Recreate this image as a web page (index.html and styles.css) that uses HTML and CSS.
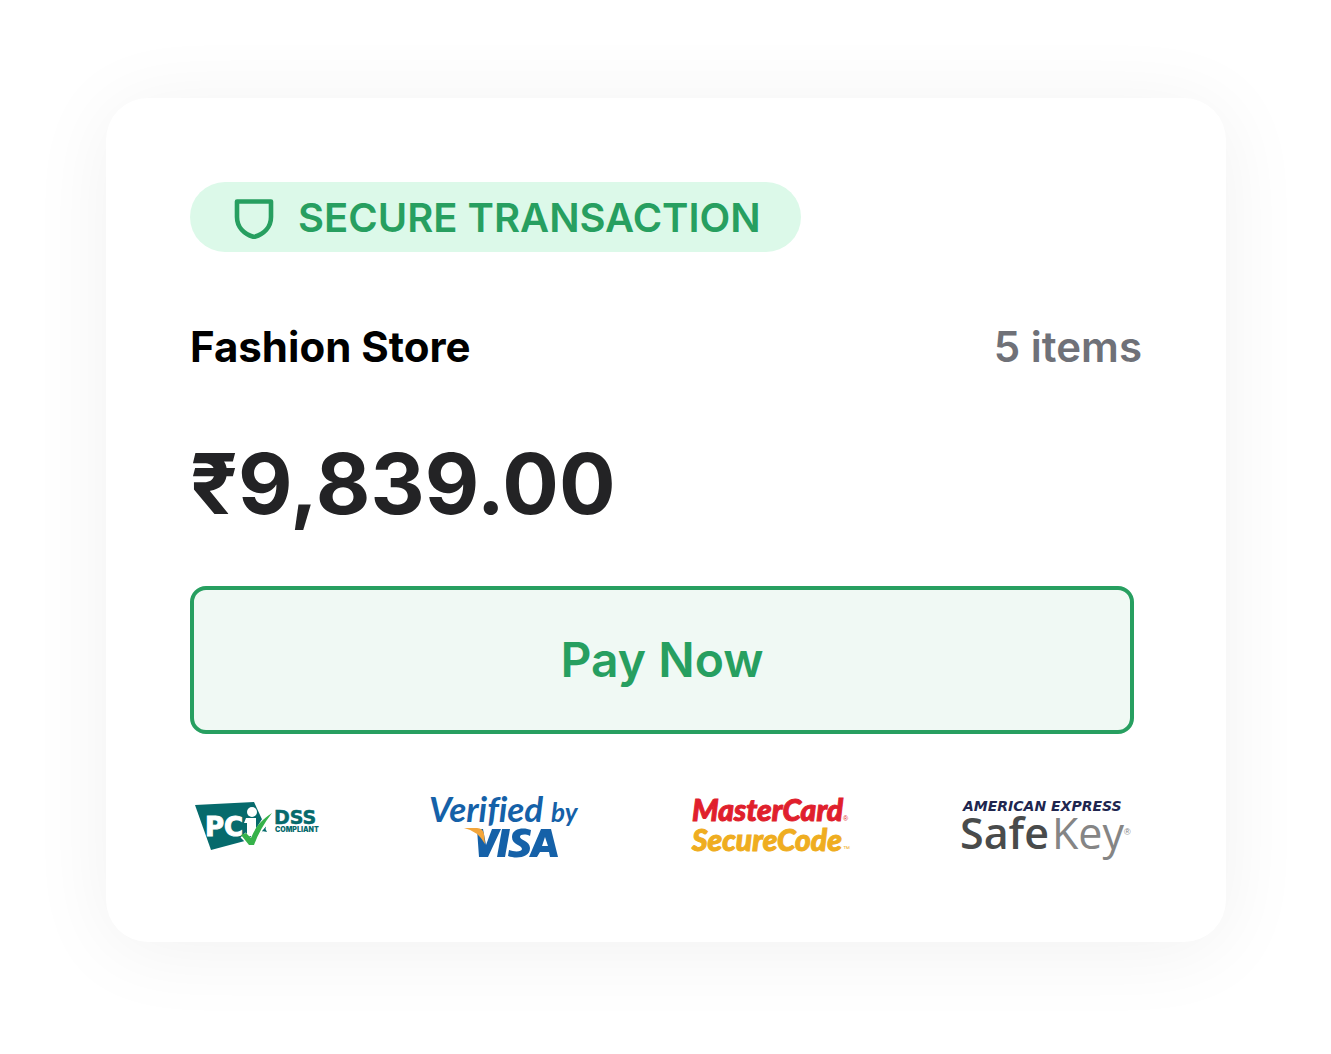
FILE: index.html
```html
<!DOCTYPE html>
<html lang="en">
<head>
  <meta charset="UTF-8" />
  <meta name="viewport" content="width=device-width, initial-scale=1.0"/>
  <title>Secure Checkout</title>
  <link rel="stylesheet" href="styles.css">
</head>
<body>

  <main class="card">
    <div class="badge">
      <svg class="shield" viewBox="0 0 40 42" aria-hidden="true">
        <path d="M3 4.5H37V20C37 30 30 37 20 40C10 37 3 30 3 20Z" />
      </svg>
      <span>SECURE TRANSACTION</span>
    </div>

    <div class="order">
      <h1 class="store">Fashion Store</h1>
      <span class="items">5 items</span>
    </div>

    <p class="amount">₹9,839.00</p>

    <button type="button" class="pay">Pay Now</button>

    <div class="logos">
      <!-- PCI DSS -->
      <svg width="128" height="64" viewBox="0 0 128 64" role="img" aria-label="PCI DSS Compliant">
        <path d="M5 11L64 8L76 34L66 44L21 56Z" fill="#066a6c" />
        <text class="pci" x="15" y="42">PC</text>
        <path d="M56 24H66V42H57V29H54Z" fill="#fff" />
        <circle cx="62" cy="18" r="5" fill="#fff" />
        <path d="M53 41L61 49L75 27" fill="none" stroke="#fff" stroke-width="7" />
        <path d="M51 41L56 39L61 44C65 34 70 27 82 19C74 29 68 40 64 51H59Z" fill="#36b24a" />
        <path d="M72 37L77 38L75 34Z" fill="#066a6c" />
        <text class="dss" x="84" y="30">DSS</text>
        <text class="compliant" x="85" y="38">COMPLIANT</text>
      </svg>

      <!-- Verified by Visa -->
      <svg width="150" height="64" viewBox="0 0 150 64" role="img" aria-label="Verified by Visa">
        <text class="verified" x="-1" y="28">Verified</text>
        <text class="by" x="121" y="28">by</text>
        <path d="M47 35H53L56 51L62 35H71L58 63H49Z" fill="#1561a8" />
        <path d="M34 34H47Q53 34 54 40L55 50Q48 37 34 34Z" fill="#f3a53a" />
        <path d="M72 35H80L75 63H67Z" fill="#1561a8" />
        <path d="M101 36L100 42C96 40 90 40 90 43C90 46 100 47 100 54C100 64 86 65 78 62L79 56C84 58 92 58 92 55C92 51 82 51 82 43C82 34 94 33 101 36Z" fill="#1561a8" />
        <path fill-rule="evenodd" d="M111 35H121L128 63H120L119 58H110L107 63H99ZM115 43L112 52H118Z" fill="#1561a8" />
      </svg>

      <!-- MasterCard SecureCode -->
      <svg width="157" height="64" viewBox="0 0 157 64" role="img" aria-label="MasterCard SecureCode">
        <text class="mastercard" x="0" y="27">MasterCard</text>
        <text class="tiny red" x="151" y="27">®</text>
        <text class="securecode" x="0" y="57">SecureCode</text>
        <text class="tiny yellow" x="151" y="57">™</text>
      </svg>

      <!-- American Express SafeKey -->
      <svg width="173" height="64" viewBox="0 0 173 64" role="img" aria-label="American Express SafeKey">
        <text class="amex" x="2" y="17">AMERICAN EXPRESS</text>
        <text class="safe" x="-1" y="55">Safe</text>
        <text class="key" x="91" y="55">Key</text>
        <text class="reg" x="163" y="41">®</text>
      </svg>
    </div>
  </main>

</body>
</html>
```
FILE: styles.css
```css
* {
  box-sizing: border-box;
}

body {
  margin: 0;
  padding: 98px 105px 98px 106px;
  background: #fff;
  font-family: Inter, "Liberation Sans", sans-serif;
}

.card {
  padding: 84px;
  background: #fff;
  border-radius: 42px;
  box-shadow: 0 8px 84px rgba(0, 0, 0, 0.06);
}

.badge {
  display: inline-flex;
  align-items: center;
  gap: 24px;
  height: 70px;
  padding: 2px 40px 0 44px;
  border-radius: 35px;
  background: #dcf9e9;
  color: #279f60;
  font-size: 40px;
  font-weight: 600;
  line-height: 52px;
}

.shield {
  width: 40px;
  height: 42px;
  fill: none;
  stroke: #279f60;
  stroke-width: 4.6;
  stroke-linejoin: round;
}

.order {
  display: flex;
  justify-content: space-between;
  margin-top: 69px;
  font-size: 42px;
  line-height: 52px;
}

.store {
  margin: 0;
  font-size: 42px;
  font-weight: 700;
  color: #000;
}

.items {
  font-weight: 600;
  color: #6f7178;
}

.amount {
  margin: 60px 0 51px;
  font-size: 84px;
  font-weight: 700;
  line-height: 102px;
  color: #232325;
}

.pay {
  display: block;
  width: calc(100% - 8px);
  height: 148px;
  padding: 0 0 2px;
  border: 4px solid #279f60;
  border-radius: 16px;
  background: #f0f9f4;
  color: #279f60;
  font-family: inherit;
  font-size: 48px;
  font-weight: 600;
  cursor: pointer;
}

.logos {
  display: flex;
  justify-content: space-between;
  margin-top: 60px;
  padding-right: 8px;
}

.logos svg {
  overflow: visible;
}

.pci {
  font: 700 26px "DejaVu Sans", sans-serif;
  fill: #fff;
  stroke: #fff;
}

.dss {
  font: 700 19px "DejaVu Sans", sans-serif;
  fill: #066a6c;
  stroke: #066a6c;
  stroke-width: 0.5;
}

.compliant {
  font: 900 7px Inter, sans-serif;
  fill: #066a6c;
}

.verified {
  font: italic 700 35px Lato, sans-serif;
  font-variant-ligatures: none;
  fill: #1561a8;
}

.by {
  font: italic 700 26px Lato, sans-serif;
  fill: #1561a8;
}

.mastercard,
.securecode {
  font: italic 900 30px Lato, sans-serif;
}

.mastercard,
.red {
  fill: #e01f2d;
}

.securecode,
.yellow {
  fill: #efad20;
}

.mastercard {
  stroke: #e01f2d;
}

.securecode {
  stroke: #efad20;
}

.tiny {
  font-family: "Liberation Sans", sans-serif;
  font-size: 7px;
}

.amex {
  font: italic 700 14px "DejaVu Sans", sans-serif;
  fill: #20264f;
}

.safe {
  font: 600 43px "Open Sans", sans-serif;
  fill: #494b4b;
}

.key {
  font: 400 43px "Open Sans", sans-serif;
  fill: #858585;
}

.reg {
  font: 400 9px "Liberation Sans", sans-serif;
  fill: #858585;
}
```
